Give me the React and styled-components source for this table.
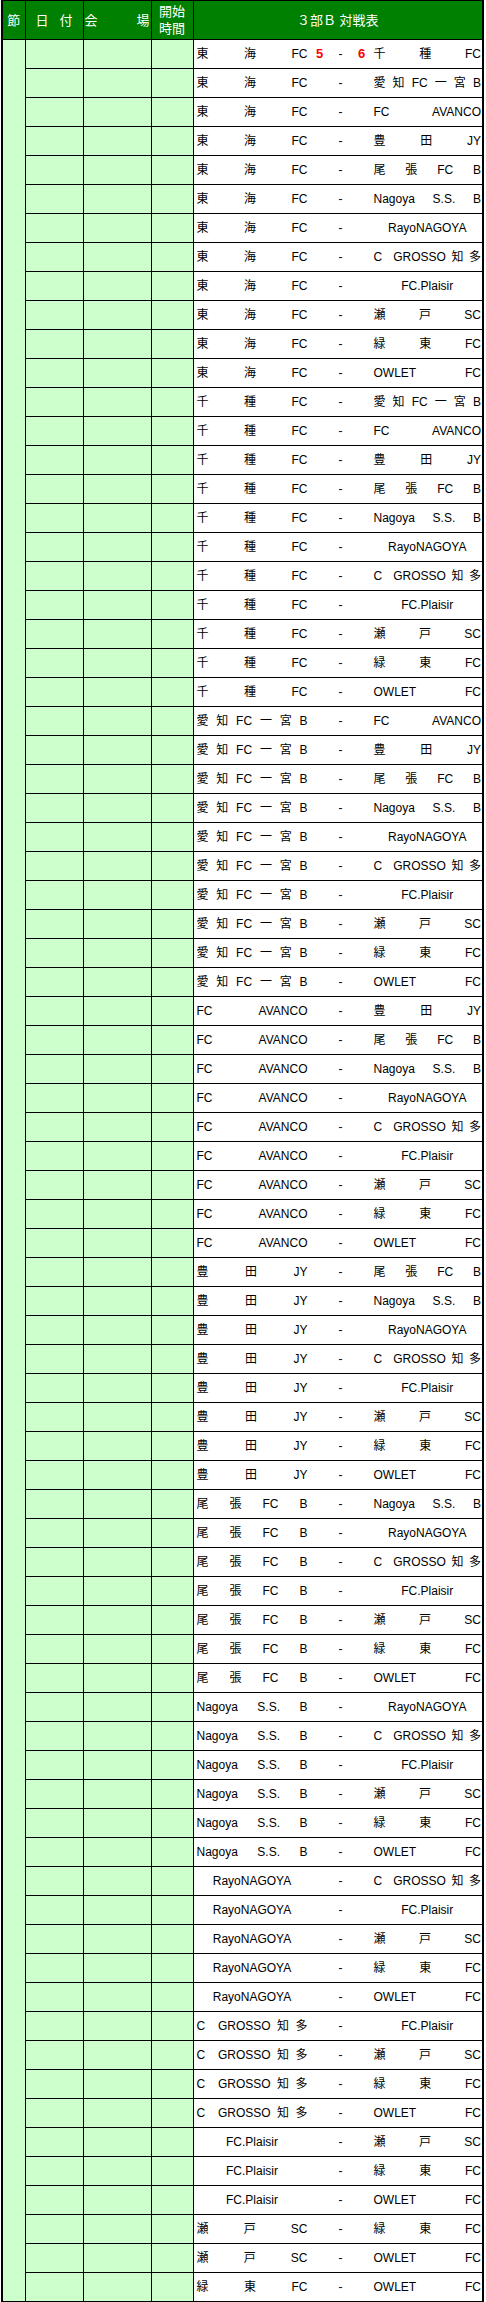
import React from "react";
import styled, { createGlobalStyle } from "styled-components";

const GlobalStyle = createGlobalStyle`
  body {
    margin: 0;
    background: #ffffff;
    font-family: "Liberation Sans", "Noto Sans CJK JP", sans-serif;
  }
`;

const Table = styled.table`
  border-collapse: collapse;
  table-layout: fixed;
  width: 483px;
  margin-left: 1px;
  border: 2px solid #000;
  border-top-width: 1px;
  font-size: 12px;
  color: #000;
`;

const HeadRow = styled.tr`
  height: 39px;
`;

const BodyRow = styled.tr`
  height: 29px;
`;

const HeadCell = styled.th`
  background: #008000;
  color: #ffffff;
  font-weight: normal;
  font-size: 13px;
  line-height: 17px;
  border: 1px solid #000;
  padding: 0 ${(p) => p.$pad || 0}px;
  vertical-align: middle;
  text-align: center;
`;

const Spread = styled.div`
  display: flex;
  justify-content: space-between;
`;

const Cell = styled.td`
  background: #ccffcc;
  border: 1px solid #000;
  padding: 0;
`;

const MatchCell = styled.td`
  background: #ffffff;
  border: 1px solid #000;
  padding: 0 1px 0 3px;
  vertical-align: middle;
`;

const Match = styled.div`
  display: grid;
  grid-template-columns: 111px 24px 18px 24px 1fr;
  align-items: center;
  white-space: nowrap;
  line-height: 16px;
`;

const Team = styled.div`
  display: flex;
  justify-content: ${(p) => (p.$single ? "center" : "space-between")};
`;

const Score = styled.span`
  color: #ff0000;
  font-weight: bold;
  font-size: 13px;
  text-align: center;
`;

const Dash = styled.span`
  text-align: center;
`;

const teams = [
  ["東", "海", "FC"],
  ["千", "種", "FC"],
  ["愛", "知", "FC", "一", "宮", "B"],
  ["FC", "AVANCO"],
  ["豊", "田", "JY"],
  ["尾", "張", "FC", "B"],
  ["Nagoya", "S.S.", "B"],
  ["RayoNAGOYA"],
  ["C", "", "GROSSO", "知", "多"],
  ["FC.Plaisir"],
  ["瀬", "戸", "SC"],
  ["緑", "東", "FC"],
  ["OWLET", "FC"],
];

const matches = [];
for (let i = 0; i < teams.length; i++) {
  for (let j = i + 1; j < teams.length; j++) {
    matches.push({ home: teams[i], away: teams[j] });
  }
}
matches[0].score = ["5", "6"];

const TeamName = ({ parts }) => (
  <Team $single={parts.length === 1}>
    {parts.map((p, i) => (
      <span key={i}>{p}</span>
    ))}
  </Team>
);

export default function App() {
  return (
    <>
      <GlobalStyle />
      <Table>
        <colgroup>
          <col style={{ width: 23 }} />
          <col style={{ width: 58 }} />
          <col style={{ width: 68 }} />
          <col style={{ width: 42 }} />
          <col />
        </colgroup>
        <thead>
          <HeadRow>
            <HeadCell>節</HeadCell>
            <HeadCell $pad={10}>
              <Spread>
                <span>日</span>
                <span>付</span>
              </Spread>
            </HeadCell>
            <HeadCell $pad={1}>
              <Spread>
                <span>会</span>
                <span>場</span>
              </Spread>
            </HeadCell>
            <HeadCell>
              開始
              <br />
              時間
            </HeadCell>
            <HeadCell>３部Ｂ 対戦表</HeadCell>
          </HeadRow>
        </thead>
        <tbody>
          {matches.map((m, i) => (
            <BodyRow key={i}>
              {i === 0 && <Cell rowSpan={matches.length} />}
              <Cell />
              <Cell />
              <Cell />
              <MatchCell>
                <Match>
                  <TeamName parts={m.home} />
                  <Score>{m.score ? m.score[0] : ""}</Score>
                  <Dash>-</Dash>
                  <Score>{m.score ? m.score[1] : ""}</Score>
                  <TeamName parts={m.away} />
                </Match>
              </MatchCell>
            </BodyRow>
          ))}
        </tbody>
      </Table>
    </>
  );
}
